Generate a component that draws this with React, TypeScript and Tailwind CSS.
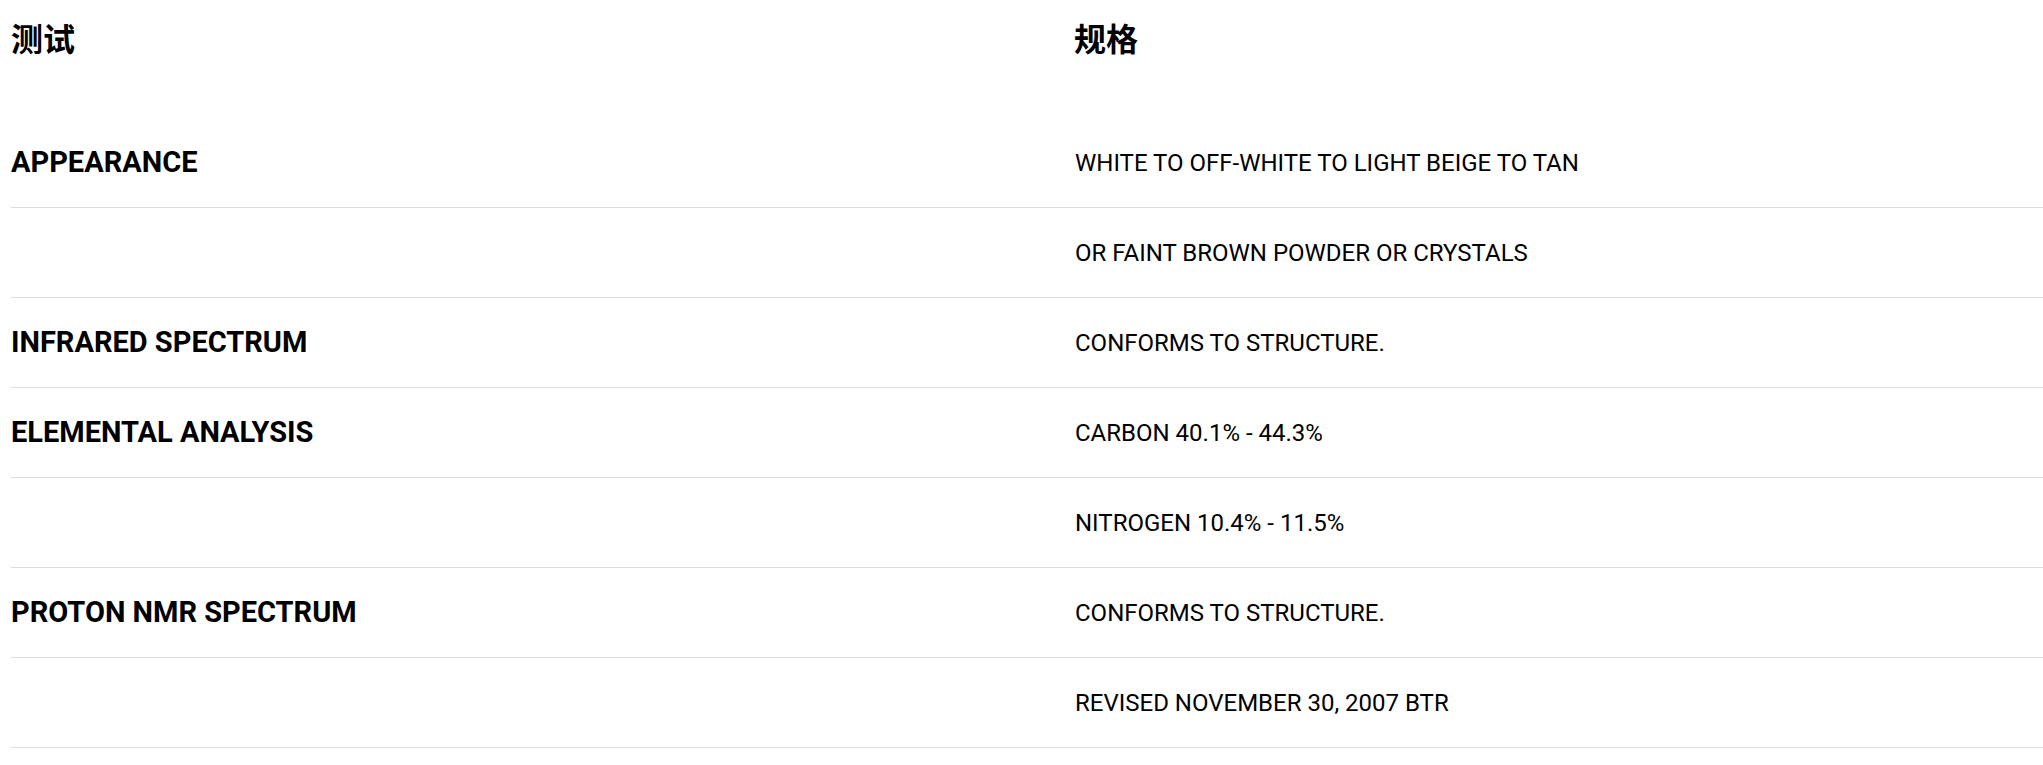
import React from "react";

const rows: { label: string; value: string }[] = [
  { label: "APPEARANCE", value: "WHITE TO OFF-WHITE TO LIGHT BEIGE TO TAN" },
  { label: "", value: "OR FAINT BROWN POWDER OR CRYSTALS" },
  { label: "INFRARED SPECTRUM", value: "CONFORMS TO STRUCTURE." },
  { label: "ELEMENTAL ANALYSIS", value: "CARBON 40.1% - 44.3%" },
  { label: "", value: "NITROGEN 10.4% - 11.5%" },
  { label: "PROTON NMR SPECTRUM", value: "CONFORMS TO STRUCTURE." },
  { label: "", value: "REVISED NOVEMBER 30, 2007 BTR" },
];

export default function App() {
  return (
    <div className="min-h-screen w-full bg-white pl-[11px] text-black font-['Roboto','Noto_Sans_CJK_SC',sans-serif]">
      <div className="mb-[44px] flex h-[74px] items-center font-['Noto_Sans_CJK_SC',sans-serif] text-[32px] font-bold">
        <div className="w-[1063px] shrink-0">测试</div>
        <div className="flex-1">规格</div>
      </div>
      {rows.map((r, i) => (
        <div key={i} className="flex h-[90px] items-center border-b border-[#dedede]">
          <div className="w-[1063px] shrink-0 text-[29px] font-bold">{r.label}</div>
          <div className="flex-1 pl-[1px] text-[24px] font-normal">{r.value}</div>
        </div>
      ))}
    </div>
  );
}
